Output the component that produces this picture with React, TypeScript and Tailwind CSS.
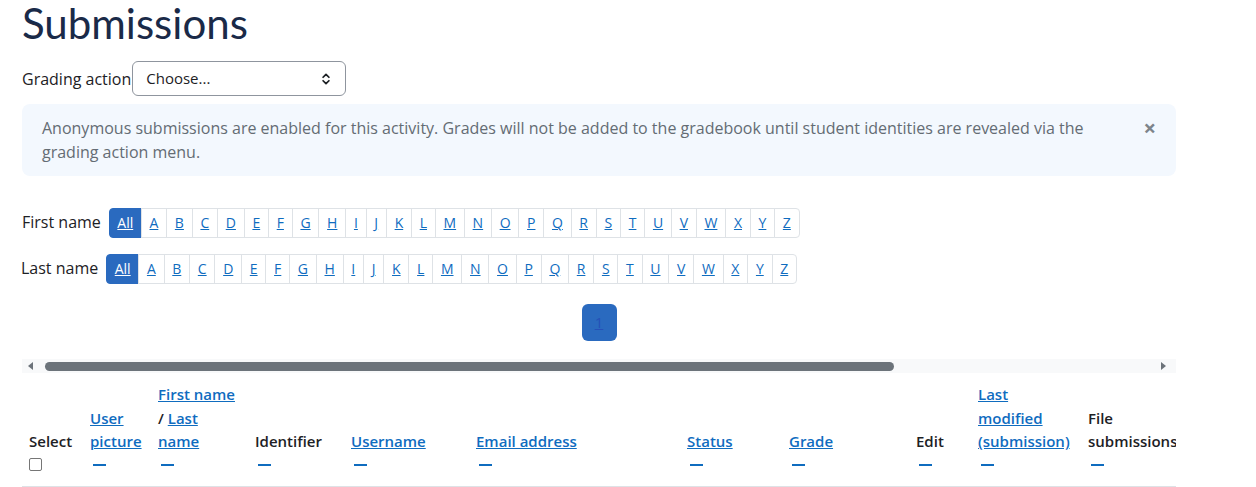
import { ChevronsUpDown } from "lucide-react";

const letters = "ABCDEFGHIJKLMNOPQRSTUVWXYZ".split("");

function LetterBar({ label }: { label: string }) {
  return (
    <div className="flex items-center">
      <span className="mr-2 -mt-[3px] text-base text-[#1d2125]">{label}</span>
      <div className="flex text-sm leading-[20px]">
        <a className="rounded-l-[4px] border border-[#2a6abf] bg-[#2a6abf] px-[7.5px] py-1 text-white underline">
          All
        </a>
        {letters.map((l, i) => (
          <a
            key={l}
            className={
              "-ml-px border border-[#dee2e6] bg-white px-[7.75px] py-1 text-[#0f6cbf] underline" +
              (i === letters.length - 1 ? " rounded-r-[4px]" : "")
            }
          >
            {l}
          </a>
        ))}
      </div>
    </div>
  );
}

type Col = { w: string; lines: React.ReactNode[]; link?: boolean; select?: boolean };

const cols: Col[] = [
  { w: "w-[61px]", lines: ["Select"], select: true },
  { w: "w-[68px]", lines: ["User", "picture"], link: true },
  {
    w: "w-[97px]",
    lines: [
      <a className="text-[#0f6cbf] underline">First name</a>,
      <span>
        / <a className="text-[#0f6cbf] underline">Last</a>
      </span>,
      <a className="text-[#0f6cbf] underline">name</a>,
    ],
  },
  { w: "w-[96px]", lines: ["Identifier"] },
  { w: "w-[125px]", lines: ["Username"], link: true },
  { w: "w-[211px]", lines: ["Email address"], link: true },
  { w: "w-[102px]", lines: ["Status"], link: true },
  { w: "w-[127px]", lines: ["Grade"], link: true },
  { w: "w-[62px]", lines: ["Edit"] },
  { w: "w-[110px]", lines: ["Last", "modified", "(submission)"], link: true },
  { w: "w-[104px]", lines: ["File", "submissions"] },
];

export default function App() {
  return (
    <div className="min-h-screen bg-white px-[22px] font-['Open_Sans',sans-serif] text-[#1d2125]">
      <div className="w-[1154px]">
        <h1 className="font-['Lato',sans-serif] text-[42px] leading-[46px] text-[#1a2a48]">
          Submissions
        </h1>

        <div className="mt-[15px] flex items-center">
          <label className="text-base">Grading action</label>
          <div className="relative ml-px flex h-[35px] w-[214px] items-center rounded-[6px] border border-[#8f959e] pl-[13px] text-[15px]">
            Choose...
            <ChevronsUpDown className="absolute right-[12px] top-[10px] h-[14px] w-[14px]" strokeWidth={3} />
          </div>
        </div>

        <div className="mt-2 flex items-start justify-between rounded-[8px] bg-[#f3f8fe] px-5 py-3 text-base leading-6 text-[#646c74]">
          <p className="w-[1060px]">
            Anonymous submissions are enabled for this activity. Grades will not be added to the gradebook until
            student identities are revealed via the grading action menu.
          </p>
          <span className="text-[22px] font-bold leading-[22px] text-[#7d848b]">×</span>
        </div>

        <div className="mt-8 flex flex-col gap-4">
          <LetterBar label="First name" />
          <div className="-ml-px">
            <LetterBar label="Last name" />
          </div>
        </div>

        <div className="mt-5 flex justify-center">
          <a className="flex h-[37px] w-[35px] items-center justify-center rounded-[6px] bg-[#2a6abf] text-[15px] text-[#2550b8] underline">
            1
          </a>
        </div>

        <div className="mt-[18px] flex h-[14px] items-center bg-[#f8f9fa] px-[6px]">
          <span className="h-0 w-0 border-y-[4px] border-r-[5px] border-y-transparent border-r-[#6c737a]" />
          <div className="ml-[12px] h-[9px] w-[849px] rounded-full bg-[#6c737a]" />
          <div className="flex-1" />
          <span className="mr-[4px] h-0 w-0 border-y-[4px] border-l-[5px] border-y-transparent border-l-[#6c737a]" />
        </div>

        <div className="overflow-hidden">
          <table className="w-[1163px] table-fixed border-collapse">
            <thead>
              <tr className="border-b border-[#dee2e6]">
                {cols.map((c, i) => (
                  <th
                    key={i}
                    className={c.w + " pb-[10px] pl-[7px] pr-[10px] pt-[10px] text-left align-bottom text-[15px] font-semibold leading-[23.5px]"}
                  >
                    {c.lines.map((l, j) => (
                      <div key={j} className="whitespace-nowrap">
                        {c.link ? <a className="text-[#0f6cbf] underline">{l}</a> : l}
                      </div>
                    ))}
                    <div className="flex h-[22px] items-center">
                      {c.select ? (
                        <span className="h-[13px] w-[13px] rounded-[2px] border border-[#767676] bg-white" />
                      ) : (
                        <span className="ml-[3px] h-[2px] w-[13px] bg-[#0f6cbf]" />
                      )}
                    </div>
                  </th>
                ))}
              </tr>
            </thead>
          </table>
        </div>
      </div>
    </div>
  );
}
